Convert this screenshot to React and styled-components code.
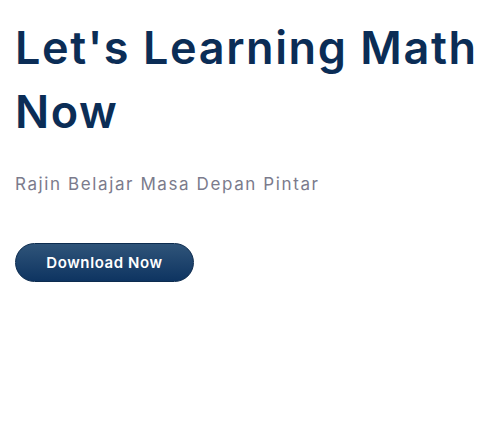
import React from "react";
import styled, { createGlobalStyle } from "styled-components";

const Global = createGlobalStyle`
  html, body { margin: 0; padding: 0; background: #ffffff; }
  body { font-family: Inter, "Noto Sans", sans-serif; }
`;

const Hero = styled.section`
  display: flex;
  flex-direction: column;
  align-items: flex-start;
  padding: 16px 15px 0 15px;
`;

const Title = styled.h1`
  margin: 0;
  font-family: Inter, sans-serif;
  font-weight: 600;
  font-size: 45px;
  line-height: 64px;
  letter-spacing: 1.6px;
  white-space: nowrap;
  color: #0b2d56;
`;

const Subtitle = styled.p`
  margin: 26px 0 0 0;
  font-family: Inter, sans-serif;
  font-weight: 400;
  font-size: 17px;
  line-height: 28px;
  letter-spacing: 1.6px;
  color: #7b7b8c;
`;

const Button = styled.button`
  margin-top: 45px;
  width: 179px;
  height: 39px;
  border-radius: 20px;
  border: 1px solid #0d2c4f;
  background: linear-gradient(180deg, #2f5479 0%, #0e3461 100%);
  color: #ffffff;
  font-family: Inter, sans-serif;
  font-weight: 600;
  font-size: 15px;
  letter-spacing: 0.6px;
  cursor: pointer;
`;

export default function App() {
  return (
    <>
      <Global />
      <Hero>
        <Title>
          Let's Learning Math
          <br />
          Now
        </Title>
        <Subtitle>Rajin Belajar Masa Depan Pintar</Subtitle>
        <Button>Download Now</Button>
      </Hero>
    </>
  );
}
